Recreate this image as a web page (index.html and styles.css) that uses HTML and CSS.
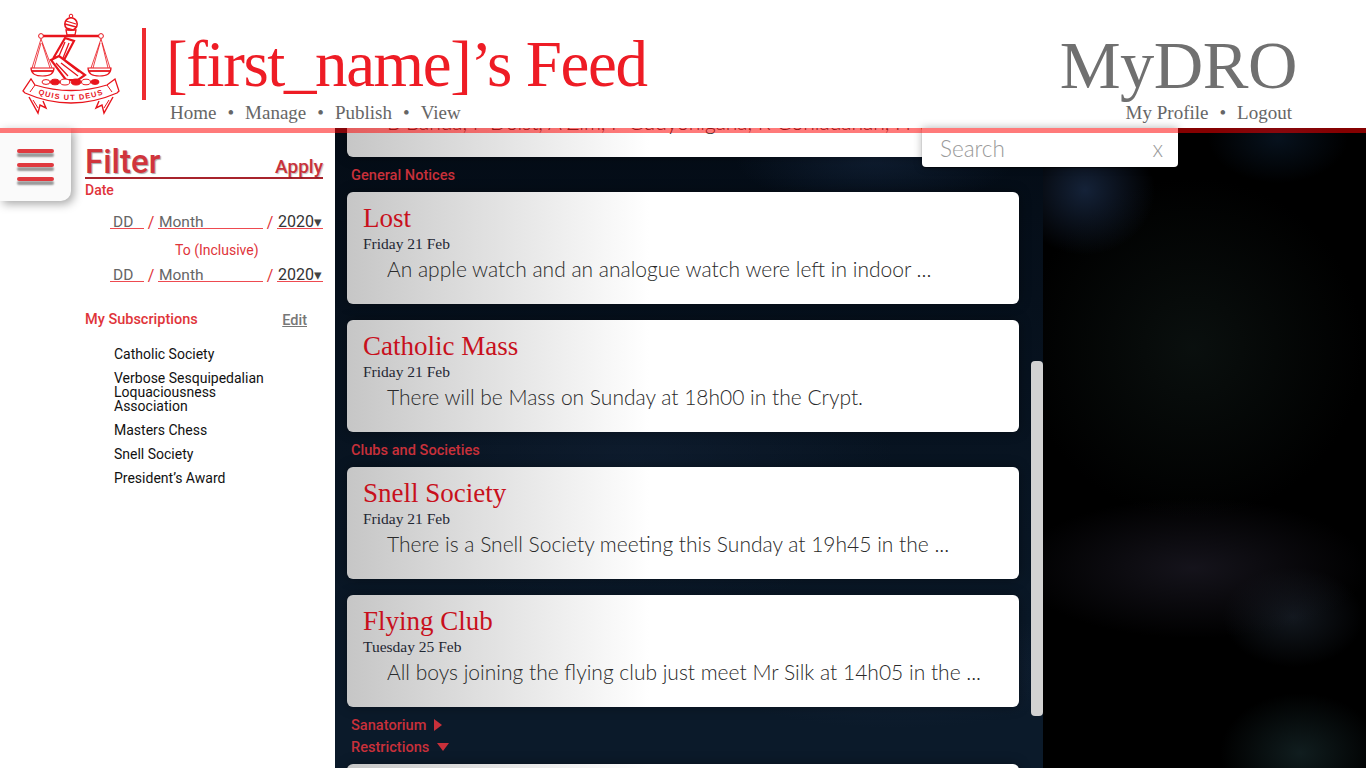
FILE: index.html
```html
<!DOCTYPE html>
<html>
<head>
  <title>MyDRO Feed</title>
  <link rel="stylesheet" href="styles.css">
</head>
<body>

  <header class="topbar">
    <svg class="crest" viewBox="0 0 100 104" width="100" height="104">
      <defs>
        <path id="mottoline" d="M12 79Q50 95 88 79"/>
      </defs>
      <g fill="none" stroke="#e8141c" stroke-width="1">
        <!-- pommel and grip -->
        <circle cx="50" cy="3" r="1.8"/>
        <circle cx="50" cy="11" r="6.2" stroke-width="1.6"/>
        <path d="M45 8l10 3M44 11l11 3M46 15l7 2" stroke-width="1.3"/>
        <path d="M45 17h10l-1 5h-8z" stroke-width="1.3"/>
        <!-- beam -->
        <path d="M21 23H79" stroke-width="2.6"/>
        <circle cx="20" cy="23" r="2.4" fill="#fff"/>
        <circle cx="80" cy="23" r="2.4" fill="#fff"/>
        <!-- left pan -->
        <path d="M20 26L11 55M20 26L31 55M13 55L20 30M29 55L21 30" stroke-width=".8"/>
        <path d="M10 55h23c0 6-5 8-11.500 8S10 61 10 55z" fill="#fff" stroke-width="1.2"/>
        <path d="M11 58h21" stroke-width="1.8"/>
        <!-- right pan -->
        <path d="M80 26L70 55M80 26L89 55M72 55L79 30M87 55L81 30" stroke-width=".8"/>
        <path d="M67 55h23c0 6-5 8-11.500 8S67 61 67 55z" fill="#fff" stroke-width="1.2"/>
        <path d="M68 58h21" stroke-width="1.8"/>
        <!-- hilt -->
        <path d="M44 25l9 3-10 19-10-3z" fill="#fff" stroke-width="2.2"/>
        <path d="M44 29l-6 14M48 30l-6 15" stroke-width="1.3"/>
        <!-- book -->
        <path d="M30 47l8-4 26 19-7 5-12 0z" fill="#fff" stroke-width="2.2"/>
        <path d="M40 50l17 13M44 48l14 11M35 50l12 13" stroke-width="1.3"/>
        <!-- ribbon -->
        <path d="M14 72Q50 83 86 72L94 66L98 78L96 80Q50 100 4 80L2 78L10 66Z" fill="#fff" stroke-width="1.3"/>
        <path d="M14 72L9 79M86 72L91 79" stroke-width="1"/>
        <path d="M8 84L17 100L19 92L25 95L22 88M92 84L83 100L81 92L75 95L78 88" stroke-width="1.4"/>
        <path d="M12 87L17 95M88 87L83 95" stroke-width="1"/>
      </g>
      <g fill="#e8141c" stroke="#e8141c">
        <ellipse cx="25" cy="69" rx="4" ry="2.4" fill="#fff"/>
        <ellipse cx="34" cy="69" rx="4.500" ry="2.800"/>
        <ellipse cx="44" cy="69" rx="4.800" ry="3" fill="#fff"/>
        <ellipse cx="55" cy="69" rx="4.800" ry="3"/>
        <ellipse cx="65" cy="69" rx="4.500" ry="2.800" fill="#fff"/>
        <ellipse cx="74" cy="69" rx="4" ry="2.400"/>
      </g>
      <text class="crest-motto"><textPath href="#mottoline" startOffset="50%" text-anchor="middle">QUIS UT DEUS</textPath></text>
    </svg>

    <div class="divider"></div>

    <div class="titleblock">
      <h1 class="pagetitle">[first_name]’s Feed</h1>
      <nav class="nav">
        <a>Home</a><span class="dot">•</span><a>Manage</a><span class="dot">•</span><a>Publish</a><span class="dot">•</span><a>View</a>
      </nav>
    </div>

    <div class="accountblock">
      <div class="brand">MyDRO</div>
      <nav class="nav nav-account">
        <a>My Profile</a><span class="dot">•</span><a>Logout</a>
      </nav>
    </div>
  </header>

  <div class="page">
    <aside class="sidebar">
      <div class="filter-head">
        <span class="filter-title">Filter</span>
        <a class="apply">Apply</a>
      </div>
      <div class="label">Date</div>

      <div class="daterow">
        <span class="field field-day">DD</span><span class="slash">/</span>
        <span class="field field-month">Month</span><span class="slash">/</span>
        <span class="field field-year">2020<i class="arrow">▾</i></span>
      </div>
      <div class="to-label">To (Inclusive)</div>
      <div class="daterow">
        <span class="field field-day">DD</span><span class="slash">/</span>
        <span class="field field-month">Month</span><span class="slash">/</span>
        <span class="field field-year">2020<i class="arrow">▾</i></span>
      </div>

      <div class="subs-head">
        <span class="label">My Subscriptions</span>
        <a class="edit">Edit</a>
      </div>
      <ul class="subs">
        <li>Catholic Society</li>
        <li>Verbose Sesquipedalian Loquaciousness Association</li>
        <li>Masters Chess</li>
        <li>Snell Society</li>
        <li>President’s Award</li>
      </ul>
    </aside>

    <main class="feed">
      <article class="card card-cut">
        <p class="card-text">B Banda, P Dolst, A Zim, P Gudyonigana, R Goniadahan, H Vlotho</p>
      </article>

      <h2 class="section">General Notices</h2>
      <article class="card">
        <h3 class="card-title">Lost</h3>
        <div class="card-date">Friday 21 Feb</div>
        <p class="card-text">An apple watch and an analogue watch were left in indoor ...</p>
      </article>
      <article class="card">
        <h3 class="card-title">Catholic Mass</h3>
        <div class="card-date">Friday 21 Feb</div>
        <p class="card-text">There will be Mass on Sunday at 18h00 in the Crypt.</p>
      </article>

      <h2 class="section">Clubs and Societies</h2>
      <article class="card">
        <h3 class="card-title">Snell Society</h3>
        <div class="card-date">Friday 21 Feb</div>
        <p class="card-text">There is a Snell Society meeting this Sunday at 19h45 in the ...</p>
      </article>
      <article class="card">
        <h3 class="card-title">Flying Club</h3>
        <div class="card-date">Tuesday 25 Feb</div>
        <p class="card-text">All boys joining the flying club just meet Mr Silk at 14h05 in the ...</p>
      </article>

      <h2 class="section section-closed">Sanatorium <span class="tri tri-right"></span></h2>
      <h2 class="section section-open">Restrictions <span class="tri tri-down"></span></h2>
      <article class="card"></article>

      <div class="scrollthumb"></div>
    </main>

    <div class="backdrop"></div>
  </div>

  <!-- overlays -->
  <div class="redline"></div>
  <button class="menubtn"><span></span><span></span><span></span></button>
  <div class="search">
    <span class="search-text">Search</span>
    <span class="search-x">x</span>
  </div>

</body>
</html>
```
FILE: styles.css
```css
html, body {
  margin: 0;
  height: 100%;
  overflow: hidden;
}

body {
  font-family: Roboto, sans-serif;
  background-color: #000;
}

a {
  color: inherit;
}

/* header */
.topbar {
  height: 128px;
  background-color: #fff;
  display: flex;
  align-items: flex-start;
  position: relative;
  z-index: 2;
}

.crest {
  margin: 13px 0 0 21px;
  flex: none;
}

.crest-motto {
  font-family: "Liberation Sans", sans-serif;
  font-size: 7.5px;
  font-weight: bold;
  letter-spacing: 1.2px;
  fill: #e8141c;
}

.divider {
  width: 4px;
  height: 72px;
  background-color: #ee2b30;
  margin: 28px 0 0 21px;
  flex: none;
}

.titleblock {
  margin-left: 22px;
}

.pagetitle {
  font-family: "Liberation Serif", serif;
  font-weight: normal;
  font-size: 65px;
  line-height: 70px;
  color: #ee1c25;
  margin: 29px 0 0 -2px;
  letter-spacing: -1.4px;
  white-space: nowrap;
}

.nav {
  font-family: "Liberation Serif", serif;
  font-size: 19px;
  line-height: 24px;
  color: #666;
  display: flex;
  margin: 2px 0 0 2px;
}

.dot {
  margin: 0 11px;
}

.accountblock {
  margin-left: auto;
  margin-right: 69px;
  text-align: right;
}

.brand {
  font-family: "Liberation Serif", serif;
  font-size: 68.5px;
  line-height: 72px;
  color: #707070;
  margin-top: 29px;
  letter-spacing: -0.5px;
}

.nav-account {
  justify-content: flex-end;
  margin: 0 5px 0 0;
}

/* overlays */
.redline {
  position: absolute;
  left: 0;
  right: 0;
  top: 128px;
  height: 5px;
  background-color: rgba(255, 0, 0, 0.52);
  z-index: 5;
}

.menubtn {
  position: absolute;
  left: 0;
  top: 128px;
  width: 71px;
  height: 73px;
  border: none;
  padding: 21px 17px 0 17px;
  background-color: #fafafa;
  border-bottom-right-radius: 10px;
  box-shadow: 3px 3px 10px rgba(0, 0, 0, 0.35);
  display: flex;
  flex-direction: column;
  gap: 10px;
  z-index: 4;
}

.menubtn span {
  display: block;
  height: 4px;
  width: 37px;
  border-radius: 2px;
  background-color: #e0393f;
  box-shadow: 0 4px 2px rgba(0, 0, 0, 0.4);
}

.search {
  position: absolute;
  left: 922px;
  top: 128px;
  width: 256px;
  height: 39px;
  background-color: #fff;
  border-radius: 0 0 4px 4px;
  box-shadow: 0 1px 1px rgba(0, 0, 0, 0.5), 0 0 8px rgba(0, 0, 0, 0.3);
  z-index: 4;
  display: flex;
  justify-content: space-between;
  align-items: center;
  padding: 2px 15px 0 18px;
  box-sizing: border-box;
  font-family: Lato, sans-serif;
  font-size: 22.5px;
  font-weight: 300;
  color: #9a9a9a;
}

/* body row */
.page {
  display: flex;
  height: 640px;
}

.sidebar {
  width: 335px;
  flex: none;
  box-sizing: border-box;
  background-color: #fff;
  padding: 14px 12px 0 85px;
  color: #e0343a;
}

.filter-head {
  display: flex;
  justify-content: space-between;
  align-items: flex-end;
  border-bottom: 2px solid #a8242c;
  height: 35px;
}

.filter-title {
  font-size: 33px;
  line-height: 30px;
  font-weight: 500;
  color: #d0343c;
  text-shadow: 1px 1px 1px rgba(0, 0, 0, 0.35);
}

.apply {
  font-size: 19px;
  line-height: 20px;
  font-weight: 500;
  color: #c9323a;
  text-shadow: 1px 1px 1px rgba(0, 0, 0, 0.25);
}

.label {
  font-size: 14px;
  font-weight: 500;
  line-height: 18px;
  color: #e0343a;
  margin-top: 2px;
}

.daterow {
  display: flex;
  align-items: flex-end;
  margin: 17px 0 0 25px;
  font-size: 15.5px;
  line-height: 12px;
}

.field {
  display: block;
  color: #666;
  border-bottom: 1px solid #ee4a50;
  padding-left: 3px;
  box-sizing: content-box;
  height: 12px;
}

.field-day {
  width: 31px;
}

.field-month {
  width: 104px;
  padding-left: 1px;
}

.field-year {
  width: 45px;
  padding-left: 1px;
  font-size: 16px;
  color: #333;
  white-space: nowrap;
}

.arrow {
  font-style: normal;
  font-size: 15px;
  line-height: 0;
  color: #444;
}

.slash {
  color: #e0343a;
  width: 14px;
  text-align: center;
  font-size: 16px;
}

.to-label {
  font-size: 14px;
  line-height: 18px;
  margin: 12px 0 -7px 0;
  padding-left: 90px;
  color: #e0343a;
}

.subs-head {
  display: flex;
  justify-content: space-between;
  margin: 29px 16px 0 0;
  align-items: center;
}

.subs-head .label {
  font-size: 14.5px;
  margin-top: 0;
}

.edit {
  font-size: 14.5px;
  font-weight: 500;
  color: #777;
  text-decoration: underline;
}

.subs {
  list-style: none;
  margin: 18px 0 0 29px;
  padding: 0;
  width: 165px;
  font-size: 14px;
  line-height: 14px;
  color: #111;
}

.subs li {
  margin-bottom: 10px;
}

/* feed */
.feed {
  width: 708px;
  flex: none;
  position: relative;
  overflow: hidden;
  box-sizing: border-box;
  padding-right: 24px;
  padding-left: 12px;
  background-color: #05101d;
  background-image:
    radial-gradient(ellipse 200px 60px at 560px 540px, rgba(30, 45, 70, 0.4), transparent),
    radial-gradient(ellipse 140px 50px at 540px 30px, rgba(24, 44, 72, 0.5), transparent),
    radial-gradient(ellipse 260px 150px at 300px 340px, rgba(20, 36, 58, 0.5), transparent),
    linear-gradient(#040c16, #0b1a2a 90%);
}

.card {
  background: linear-gradient(90deg, #c6c6c6, #fff 45%);
  border-radius: 6px;
  height: 112px;
  padding: 11px 16px 0 16px;
  box-sizing: border-box;
  box-shadow: 0 0 12px rgba(0, 0, 0, 0.35);
}

.card + .card {
  margin-top: 16px;
}

.card-cut {
  margin-top: -83px;
  padding-top: 62px;
  overflow: hidden;
}

.section {
  font-size: 14.6px;
  font-weight: 500;
  line-height: 18px;
  color: #c8303a;
  margin: 9px 0 8px 4px;
}

.section-closed {
  margin: 9px 0 0 4px;
}

.section-open {
  margin: 4px 0 8px 4px;
}

.tri {
  display: inline-block;
  margin-left: 4px;
}

.tri-right {
  border-left: 8px solid #c8303a;
  border-top: 6px solid transparent;
  border-bottom: 6px solid transparent;
  vertical-align: -1px;
}

.tri-down {
  border-top: 8px solid #c8303a;
  border-left: 6px solid transparent;
  border-right: 6px solid transparent;
  vertical-align: 1px;
}

.card-title {
  font-family: "Liberation Serif", serif;
  font-weight: normal;
  font-size: 27px;
  line-height: 30px;
  color: #c8101c;
  margin: 0;
}

.card-date {
  font-family: "Liberation Serif", serif;
  font-size: 15.5px;
  line-height: 20px;
  color: #1f2733;
  margin-top: 1px;
}

.card-text {
  font-family: Lato, sans-serif;
  font-size: 21px;
  font-weight: 300;
  line-height: 28px;
  color: #2a2a2a;
  margin: 1px 0 0 24px;
  white-space: nowrap;
}

.scrollthumb {
  position: absolute;
  left: 696px;
  top: 233px;
  width: 12px;
  height: 355px;
  border-radius: 4px;
  background-color: #d2d2d2;
}

.backdrop {
  flex: 1;
  background-color: #000;
  background-image:
    radial-gradient(ellipse 70px 65px at 42px 62px, rgba(24, 40, 66, 0.85), transparent),
    radial-gradient(ellipse 70px 45px at 235px 10px, rgba(12, 30, 50, 0.6), transparent),
    radial-gradient(ellipse 175px 70px at 150px 440px, rgba(26, 24, 34, 0.8), transparent),
    radial-gradient(ellipse 70px 50px at 250px 489px, rgba(26, 34, 44, 0.7), transparent),
    radial-gradient(ellipse 80px 60px at 257px 625px, rgba(20, 36, 38, 0.8), transparent),
    radial-gradient(ellipse 170px 170px at 150px 220px, rgba(14, 22, 20, 0.7), transparent);
}
```
